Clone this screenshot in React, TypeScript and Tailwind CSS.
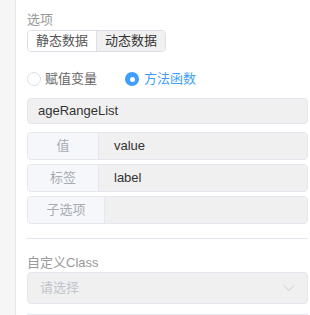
import React from "react";

const font = { fontFamily: '"Liberation Sans", "Noto Sans CJK SC", sans-serif' };

function Row({ label, value, w }: { label: string; value: string; w: string }) {
  return (
    <div className="flex h-[28px] rounded-[4px] border border-[#e4e7ed] overflow-hidden">
      <div className={`${w} shrink-0 flex items-center justify-center bg-[#f5f7fa] border-r border-[#e4e7ed] text-[13px] text-[#a8abb2]`}>
        {label}
      </div>
      <div className="flex-1 flex items-center px-[15px] bg-[#f0f0f0] text-[13px] text-[#333]">{value}</div>
    </div>
  );
}

export default function App() {
  return (
    <div className="w-[310px] h-[315px] bg-white flex overflow-hidden" style={font}>
      <div className="w-[16px] shrink-0 bg-[#f6f6f6] border-r border-[#e6e6e6]" />
      <div className="flex-1 pl-[11px] pr-[2px] pt-[12px]">
        <div className="text-[13px] leading-[16px] text-[#999]">选项</div>
        <div className="mt-[2px] flex w-[139px] h-[22px] rounded-[4px] border border-[#dcdfe6] overflow-hidden text-[13px]">
          <div className="flex-1 flex items-center justify-center bg-white text-[#555] border-r border-[#dcdfe6]">静态数据</div>
          <div className="flex-1 flex items-center justify-center bg-[#f0f0f0] text-[#333]">动态数据</div>
        </div>
        <div className="mt-[19px] flex items-center h-[16px] text-[13px]">
          <div className="w-[14px] h-[14px] rounded-full border border-[#dcdfe6] bg-white" />
          <span className="ml-[4px] text-[#666]">赋值变量</span>
          <div className="ml-[28px] w-[14px] h-[14px] rounded-full bg-[#409eff] flex items-center justify-center">
            <div className="w-[5px] h-[5px] rounded-full bg-white" />
          </div>
          <span className="ml-[5px] text-[#409eff]">方法函数</span>
        </div>
        <div className="mt-[11px] h-[26px] rounded-[4px] border border-[#e4e7ed] bg-[#f0f0f0] flex items-center px-[10px] text-[13px] text-[#333]">
          ageRangeList
        </div>
        <div className="mt-[8px] flex flex-col gap-[4px]">
          <Row label="值" value="value" w="w-[71px]" />
          <Row label="标签" value="label" w="w-[71px]" />
          <Row label="子选项" value="" w="w-[77px]" />
        </div>
        <div className="mt-[14px] border-t border-[#e4e7ed]" />
        <div className="mt-[16px] text-[13px] leading-[16px] text-[#999]">自定义Class</div>
        <div className="mt-[1px] h-[32px] rounded-[4px] border border-[#e4e7ed] bg-[#f0f0f0] flex items-center justify-between px-[12px] text-[13px] text-[#c0c4cc]">
          <span>请选择</span>
          <svg width="12" height="8" viewBox="0 0 12 8" fill="none">
            <path d="M1 1.5 L6 6.5 L11 1.5" stroke="#c8cacf" strokeWidth="1" />
          </svg>
        </div>
        <div className="mt-[10px] border-t border-[#e4e7ed]" />
      </div>
    </div>
  );
}
